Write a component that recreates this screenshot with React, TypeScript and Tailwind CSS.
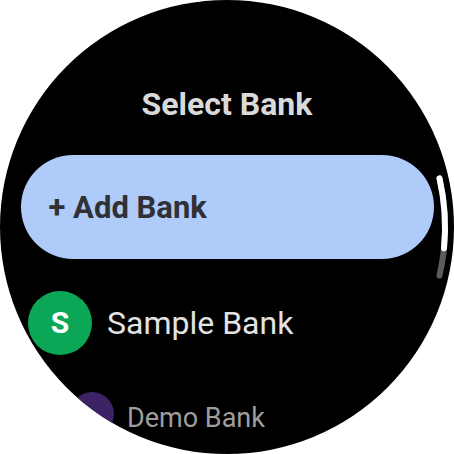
import React from 'react';

type Bank = {
  name: string;
  initial: string;
};

const banks: Bank[] = [
  { name: 'Sample Bank', initial: 'S' },
  { name: 'Demo Bank', initial: 'D' },
];

// position indicator drawn along the bezel, right side
const ScrollIndicator: React.FC = () => {
  const cx = 227;
  const cy = 227;
  const r = 218;
  const pt = (deg: number) => {
    const a = (deg * Math.PI) / 180;
    return `${(cx + r * Math.cos(a)).toFixed(1)} ${(cy + r * Math.sin(a)).toFixed(1)}`;
  };
  return (
    <svg className="absolute inset-0 pointer-events-none" width="454" height="454" viewBox="0 0 454 454">
      <path d={`M ${pt(-12.9)} A ${r} ${r} 0 0 1 ${pt(12.9)}`} fill="none" stroke="#5c5c5c" strokeWidth="6" strokeLinecap="round" />
      <path d={`M ${pt(-12.9)} A ${r} ${r} 0 0 1 ${pt(5.6)}`} fill="none" stroke="#ffffff" strokeWidth="6" strokeLinecap="round" />
    </svg>
  );
};

const App: React.FC = () => {
  return (
    <div className="w-[454px] h-[454px] bg-white">
      <div className="relative w-[454px] h-[454px] rounded-full bg-black overflow-hidden flex flex-col items-center font-['Roboto',sans-serif]">
        <h1 className="mt-[84px] text-[32px] leading-[40px] font-bold text-[#d9d9d9]">Select Bank</h1>

        <button className="mt-[31px] w-[413px] h-[104px] shrink-0 rounded-full bg-[#aecbfa] flex items-center pl-[28px]">
          <span className="text-[31px] leading-none font-bold text-[#303134]">+ Add Bank</span>
        </button>

        <div className="mt-[32px] self-start ml-[28px] flex items-center">
          <div className="w-[64px] h-[64px] rounded-full bg-[#0ba757] flex items-center justify-center">
            <span className="text-[30px] leading-none font-bold text-white">{banks[0].initial}</span>
          </div>
          <span className="ml-[15px] text-[32px] leading-none text-[#e3e3e3]">{banks[0].name}</span>
        </div>

        <div className="mt-[37px] self-start ml-[70px] flex items-center">
          <div className="w-[44px] h-[44px] rounded-full bg-[#3d2266]" />
          <span className="ml-[13px] mt-[8px] text-[27px] leading-none text-[#9e9e9e]">{banks[1].name}</span>
        </div>

        <ScrollIndicator />
      </div>
    </div>
  );
};

export default App;
